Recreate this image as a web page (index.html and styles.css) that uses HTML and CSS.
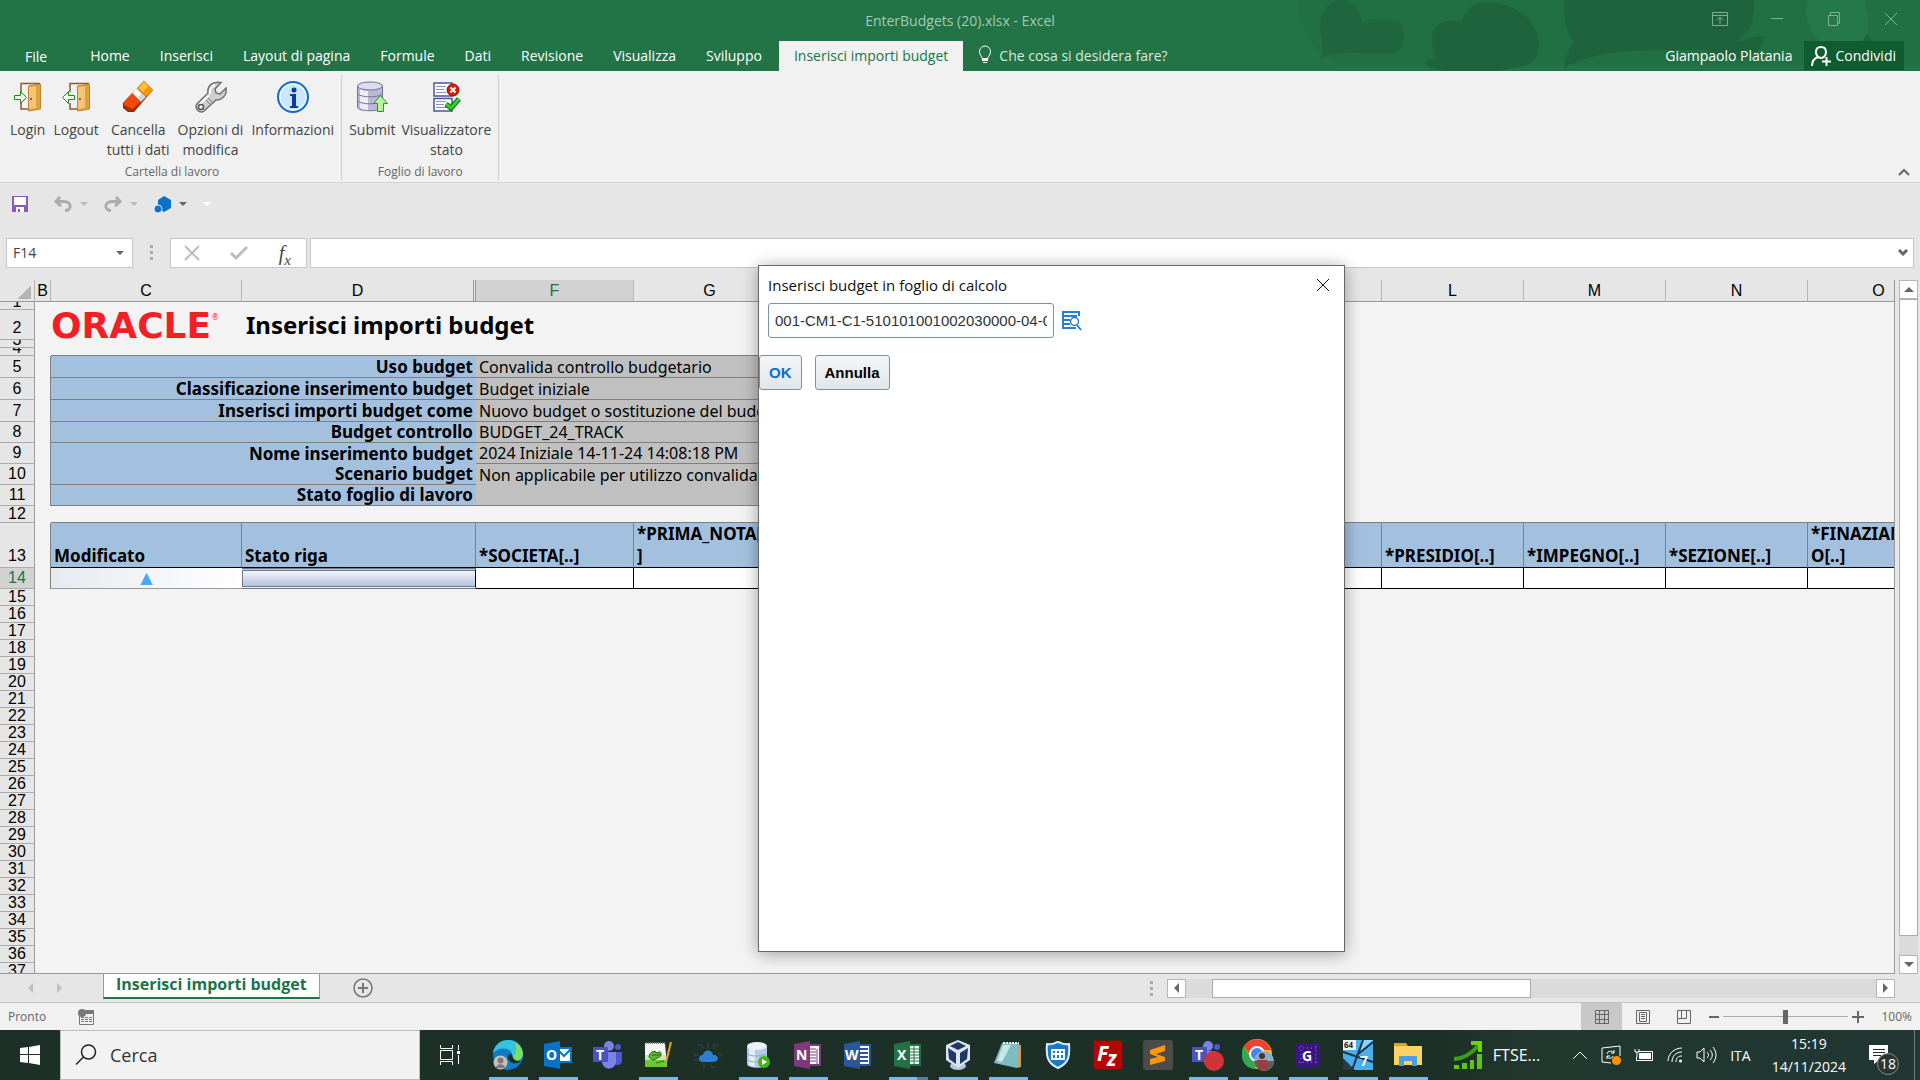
FILE: index.html
```html
<!DOCTYPE html>
<html lang="it">
<head>
    <meta charset="UTF-8">
    <meta name="viewport" content="width=device-width, initial-scale=1.0">
    <title>EnterBudgets (20).xlsx - Excel</title>
    <link rel="stylesheet" href="styles.css">
</head>
<body>
    <header class="titlebar">
        <svg class="clouds" width="640" height="71" viewBox="0 0 640 71" aria-hidden="true">
            <path fill="#206b41" d="M20 0h620v65H60C30 50 16 24 20 0z" opacity=".5"/>
            <g fill="#1f633c">
                <path d="M40 30a21 27 0 0 1 42-6c8-7 16-6 20-2 12-6 24 2 22 16-1 8-4 12-8 14-22 6-54-6-76 7 4-8 2-18 0-29z" opacity=".8"/>
                <path d="M152 38c0-14 14-20 30-16 4-12 10-20 26-20 26 0 56 22 50 48-2 10-8 14-14 16-32 6-62 14-96 0-4-6 0-8 8-6-3-6-4-14-4-22z"/>
                <path d="M284 0h190c2 28-12 44-34 48-50 6-110-6-156 20 2-14 6-20 10-26-8-10-11-24-10-42z"/>
                <path d="M420 44c20 6 40-4 60-8 8 0 2 10-6 18-22 10-40 4-54-10z"/>
                <path d="M558 65c4-18-4-33 18-33s12 15 20 33z"/>
            </g>
            <path fill="#257849" d="M528 0h56c8 24 6 44-20 54-22-4-44-26-36-54z"/>
        </svg>
        <div class="title-row">
            <span class="title">EnterBudgets (20).xlsx - Excel</span>
            <div class="window-buttons">
                <button aria-label="Opzioni barra multifunzione"><svg width="16" height="16" viewBox="0 0 16 16"><path d="M.5 1.5h15v13H.5zM.5 4.500h15M8 13V6M5 9l3-3 3 3"/></svg></button>
                <button aria-label="Riduci a icona"><svg width="16" height="16" viewBox="0 0 16 16"><path d="M2 7.500h12"/></svg></button>
                <button aria-label="Ripristina"><svg width="16" height="16" viewBox="0 0 16 16"><path d="M2.500 4.500h9v10h-9zM4.500 4V1.500h9v11H12"/></svg></button>
                <button aria-label="Chiudi"><svg width="16" height="16" viewBox="0 0 16 16"><path d="M2 2l12 12M14 2L2 14"/></svg></button>
            </div>
        </div>
        <nav class="tabs">
            <a href="#" class="file">File</a>
            <a href="#">Home</a>
            <a href="#">Inserisci</a>
            <a href="#">Layout di pagina</a>
            <a href="#">Formule</a>
            <a href="#">Dati</a>
            <a href="#">Revisione</a>
            <a href="#">Visualizza</a>
            <a href="#">Sviluppo</a>
            <a href="#" class="active">Inserisci importi budget</a>
            <a href="#" class="tell-me">
                <svg width="14" height="20" viewBox="0 0 14 20"><path fill="none" stroke="#fff" d="M4.500 14.500c0-3-3-4-3-8a5.500 5.500 0 0 1 11 0c0 4-3 5-3 8z"/><path fill="#fff" d="M4 13h6v3H4zM5 17h4v1H5z"/></svg>
                Che cosa si desidera fare?
            </a>
            <span class="user">Giampaolo Platania</span>
            <button class="share">
                <svg width="20" height="22" viewBox="0 0 20 22"><path fill="none" stroke="#fff" stroke-width="2" d="M10 2c3 0 5 2 5 5s-2 6-5 6-5-3-5-6 2-5 5-5zM1 21c0-5 3-8 6-9M11 16.500h9M15.500 12v9"/></svg>
                Condividi
            </button>
        </nav>
    </header>

    <section class="ribbon">
        <div class="group">
            <div class="tools">
                <button>
                    <svg width="32" height="32" viewBox="0 0 32 32"><path fill="none" stroke="#8a5a33" stroke-width="1.500" d="M9 11V2.500h19M9 22v6h8"/><path fill="#dca03c" stroke="#b98336" d="M16.500 5l12-2v25l-12 2z"/><path fill="#f3c574" d="M17 6l7-1v22l-7 1z"/><circle cx="19" cy="18" r="1" fill="#6b3f12"/><path fill="#f2ffec" stroke="#1b8a10" d="M2.500 14.500h6v-4l6 6-6 6v-4h-6z"/></svg>
                    <span>Login</span>
                </button>
                <button>
                    <svg width="32" height="32" viewBox="0 0 32 32"><path fill="none" stroke="#8a5a33" stroke-width="1.500" d="M10 11V2.500h19M10 22v6h8"/><path fill="#dca03c" stroke="#b98336" d="M17.500 5l12-2v25l-12 2z"/><path fill="#f3c574" d="M18 6l7-1v22l-7 1z"/><circle cx="20" cy="18" r="1" fill="#6b3f12"/><path fill="#f2ffec" stroke="#1b8a10" d="M14.500 14.500h-6v-4l-6 6 6 6v-4h6z"/></svg>
                    <span>Logout</span>
                </button>
                <button>
                    <svg width="32" height="32" viewBox="0 0 32 32"><path fill="#7d2f08" d="M1 22L22 0l9 9-19 22H6l-5-4z"/><path fill="#f3480c" d="M2 21l8-9 9 9-8 8-9-4z"/><path fill="#b92a00" d="M2 24l9 4 8-8-8 10H7l-5-4z"/><path fill="#cfd6dc" d="M10 12l5-5 9 9-5 5z"/><path fill="#fff" d="M11 12l3-4 5 5-3 4z"/><path fill="#f89406" d="M15 7l7-7 9 9-7 7z"/><path fill="#ffc640" d="M17 7l5-6 4 4-5 6z"/></svg>
                    <span>Cancella<br>tutti i dati</span>
                </button>
                <button>
                    <svg width="32" height="32" viewBox="0 0 32 32"><path fill="#cfcfcf" stroke="#6f6f6f" stroke-width="1.500" d="M26 1.500L20 8l1 4 4 1 6-6c1 7-3 12-10 12L9 30c-4 3-10-2-7-7l11-11c-1-7 4-12 13-10.500z"/><path fill="none" stroke="#fff" stroke-width="2" d="M15 13c-1-5 2-8 5-9M4 24l10-10"/><circle cx="6" cy="26" r="2.500" fill="#fff" stroke="#555" stroke-width="1.500"/><path stroke="#777" d="M11 19l4 4M13 17l4 4"/></svg>
                    <span>Opzioni di<br>modifica</span>
                </button>
                <button>
                    <svg width="32" height="32" viewBox="0 0 32 32"><circle cx="16" cy="16" r="15" fill="#cbe7ff" stroke="#1268d2" stroke-width="2"/><circle cx="16" cy="16" r="13" fill="none" stroke="#fff"/><circle cx="17" cy="9" r="2.500" fill="#0a3e9c"/><path fill="#0a3e9c" d="M13 13h6v12h2v2h-8v-2h2V15h-2z"/></svg>
                    <span>Informazioni</span>
                </button>
            </div>
            <div class="group-name">Cartella di lavoro</div>
        </div>
        <div class="group">
            <div class="tools">
                <button>
                    <svg width="32" height="32" viewBox="0 0 32 32"><path fill="#babad6" stroke="#71719b" d="M1.500 5v21c0 5 25 5 25 0V5z"/><path fill="#ececf7" d="M4 8c2 1 5 2 8 2v19c-3 0-6-1-8-2z"/><ellipse cx="14" cy="5" rx="12.500" ry="4" fill="#dcdcec" stroke="#71719b"/><path fill="none" stroke="#71719b" d="M1.500 12c0 5 25 5 25 0M1.500 19c0 5 25 5 25 0"/><path fill="#b8f5a0" stroke="#239a18" d="M24.500 14.500l7 8h-4v8h-6v-8h-4z"/></svg>
                    <span>Submit</span>
                </button>
                <button>
                    <svg width="32" height="32" viewBox="0 0 32 32"><path fill="#fff" stroke="#4d5596" stroke-width="1.500" d="M4 2h18v13H4zM4 17.500h18V30H4z"/><path stroke="#8a90bd" d="M6 5.500h10M6 8.500h8M6 11.500h10M6 20.500h10M6 23.500h8M6 26.500h11"/><circle cx="23" cy="9" r="6" fill="#d81c0c" stroke="#961004"/><path stroke="#fff" stroke-width="2" d="M20.500 6.500l5 5M25.500 6.500l-5 5"/><path fill="none" stroke="#0b6a08" stroke-width="5" d="M16 23l5 4 8-9"/><path fill="none" stroke="#2fd426" stroke-width="3" d="M16 23l5 4 8-9"/></svg>
                    <span>Visualizzatore<br>stato</span>
                </button>
            </div>
            <div class="group-name">Foglio di lavoro</div>
        </div>
        <button class="collapse" aria-label="Comprimi barra multifunzione"><svg width="12" height="8" viewBox="0 0 12 8"><path fill="none" stroke="#666" stroke-width="2" d="M1 7l5-5 5 5"/></svg></button>
    </section>

    <div class="quick-access">
        <button aria-label="Salva"><svg width="16" height="16" viewBox="0 0 16 16"><path fill="#8a5bb0" d="M0 0h16v16H0z"/><path fill="#fff" d="M2 1h12v8H2zM4 11h8v5H4z"/><path fill="#8a5bb0" d="M6 13h2v3H6z"/></svg></button>
        <button aria-label="Annulla digitazione"><svg width="18" height="16" viewBox="0 0 18 16"><path fill="none" stroke="#acacac" stroke-width="3" d="M6 1L2 5.500 7 10M3 5.500h7c8 0 8 9 1 9"/></svg><i class="caret light"></i></button>
        <button aria-label="Ripristina digitazione"><svg width="18" height="16" viewBox="0 0 18 16"><path fill="none" stroke="#acacac" stroke-width="3" d="M12 1l4 4.500-5 4.500M15 5.500H8c-8 0-8 9-1 9"/></svg><i class="caret light"></i></button>
        <button aria-label="Forme"><svg width="17" height="17" viewBox="0 0 17 17"><path fill="#0a72c8" d="M10 0l7 4v8l-7 4-6-4V4z"/><circle cx="4" cy="13" r="4" fill="#0a72c8" stroke="#e6e6e6"/></svg><i class="caret"></i></button>
        <i class="caret white"></i>
    </div>

    <div class="formula-bar">
        <div class="name-box">
            <input type="text" value="F14" aria-label="Casella nome">
            <button aria-label="Elenco nomi"><i class="caret"></i></button>
        </div>
        <span class="dots"><i></i><i></i><i></i></span>
        <div class="formula-tools">
            <button aria-label="Annulla"><svg width="16" height="16" viewBox="0 0 16 16"><path stroke="#bdbdbd" stroke-width="2" d="M1 1l14 14M15 1L1 15"/></svg></button>
            <button aria-label="Invio"><svg width="18" height="16" viewBox="0 0 18 16"><path fill="none" stroke="#bdbdbd" stroke-width="3" d="M1 8l5 5L17 2"/></svg></button>
            <button class="fx">f<sub>x</sub></button>
        </div>
        <div class="formula">
            <input type="text" aria-label="Barra della formula">
            <svg width="12" height="8" viewBox="0 0 12 8"><path fill="none" stroke="#666" stroke-width="3" d="M2 1l4 4 4-4"/></svg>
        </div>
    </div>

    <main class="workspace">
        <div class="sheet">
            <table>
                <colgroup>
                    <col class="col-head"><col class="col-b"><col class="col-c"><col class="col-d"><col class="col-f"><col class="col-g">
                    <col class="col-h"><col class="col-h"><col class="col-h"><col class="col-h">
                    <col class="col-l"><col class="col-l"><col class="col-l"><col class="col-l">
                </colgroup>
                <thead>
                    <tr><th class="corner"></th><th>B</th><th>C</th><th class="before-hidden">D</th><th class="selected">F</th><th>G</th><th>H</th><th>I</th><th>J</th><th>K</th><th>L</th><th>M</th><th>N</th><th class="last">O</th></tr>
                </thead>
                <tbody>
                    <tr class="tiny"><th><span>1</span></th></tr>
                    <tr class="r30"><th>2</th><td></td><td class="logo">ORACLE<sup>®</sup></td><td class="heading" colspan="4">Inserisci importi budget</td></tr>
                    <tr class="tiny"><th><span>3</span></th></tr>
                    <tr class="tiny"><th><span>4</span></th><td></td><td class="line" colspan="5"></td></tr>
                    <tr class="r22"><th>5</th><td class="edge"></td><td class="label" colspan="2">Uso budget</td><td class="value" colspan="3">Convalida controllo budgetario</td></tr>
                    <tr class="r22"><th>6</th><td class="edge"></td><td class="label" colspan="2">Classificazione inserimento budget</td><td class="value" colspan="3">Budget iniziale</td></tr>
                    <tr class="r22"><th>7</th><td class="edge"></td><td class="label" colspan="2">Inserisci importi budget come</td><td class="value" colspan="3">Nuovo budget o sostituzione del budget</td></tr>
                    <tr class="r21"><th>8</th><td class="edge"></td><td class="label" colspan="2">Budget controllo</td><td class="value" colspan="3">BUDGET_24_TRACK</td></tr>
                    <tr class="r21"><th>9</th><td class="edge"></td><td class="label open" colspan="2">Nome inserimento budget</td><td class="value" colspan="3">2024 Iniziale 14-11-24 14:08:18 PM</td></tr>
                    <tr class="r21"><th>10</th><td class="edge"></td><td class="label" colspan="2">Scenario budget</td><td class="value open" colspan="3">Non applicabile per utilizzo convalida controllo</td></tr>
                    <tr class="r21"><th>11</th><td class="edge"></td><td class="label" colspan="2">Stato foglio di lavoro</td><td class="value" colspan="3"></td></tr>
                    <tr><th>12</th><td></td><td class="line" colspan="12"></td></tr>
                    <tr class="r45"><th>13</th><td class="edge"></td><td class="field">Modificato</td><td class="field">Stato riga</td><td class="field">*SOCIETA[..]</td><td class="field">*PRIMA_NOTA[..<br>]</td><td class="field"></td><td class="field"></td><td class="field"></td><td class="field"></td><td class="field">*PRESIDIO[..]</td><td class="field">*IMPEGNO[..]</td><td class="field">*SEZIONE[..]</td><td class="field">*FINAZIAMENT<br>O[..]</td></tr>
                    <tr class="r21"><th class="selected">14</th><td class="edge"></td><td class="changed">▲</td><td class="status"></td><td class="entry"></td><td class="entry"></td><td class="entry"></td><td class="entry"></td><td class="entry"></td><td class="entry"></td><td class="entry"></td><td class="entry"></td><td class="entry"></td><td class="entry"></td></tr>
                    <tr><th>15</th></tr>
                    <tr><th>16</th></tr>
                    <tr><th>17</th></tr>
                    <tr><th>18</th></tr>
                    <tr><th>19</th></tr>
                    <tr><th>20</th></tr>
                    <tr><th>21</th></tr>
                    <tr><th>22</th></tr>
                    <tr><th>23</th></tr>
                    <tr><th>24</th></tr>
                    <tr><th>25</th></tr>
                    <tr><th>26</th></tr>
                    <tr><th>27</th></tr>
                    <tr><th>28</th></tr>
                    <tr><th>29</th></tr>
                    <tr><th>30</th></tr>
                    <tr><th>31</th></tr>
                    <tr><th>32</th></tr>
                    <tr><th>33</th></tr>
                    <tr><th>34</th></tr>
                    <tr><th>35</th></tr>
                    <tr><th>36</th></tr>
                    <tr><th>37</th></tr>
                </tbody>
            </table>
        </div>
        <div class="scroll-y">
            <button aria-label="Scorri su"><i class="caret up"></i></button>
            <div class="thumb"></div>
            <button aria-label="Scorri giù"><i class="caret big"></i></button>
        </div>
    </main>

    <div class="sheet-tabs">
        <div class="sheet-nav"><i class="arrow-left"></i><i class="arrow-right"></i></div>
        <a href="#" class="sheet-tab">Inserisci importi budget</a>
        <button class="add-sheet" aria-label="Nuovo foglio"><svg width="20" height="20" viewBox="0 0 20 20"><circle cx="10" cy="10" r="9" fill="none" stroke="#777" stroke-width="1.500"/><path stroke="#777" stroke-width="2" d="M10 5v10M5 10h10"/></svg></button>
        <span class="dots"><i></i><i></i><i></i></span>
        <div class="scroll-x">
            <button aria-label="Scorri a sinistra"><i class="arrow-left"></i></button>
            <div class="track"><div class="thumb"></div></div>
            <button aria-label="Scorri a destra"><i class="arrow-right"></i></button>
        </div>
    </div>

    <footer class="statusbar">
        <span>Pronto</span>
        <svg class="macro" width="16" height="16" viewBox="0 0 16 16"><path fill="none" stroke="#777" d="M1.500 6v9.500h14v-14H6"/><path fill="#777" d="M6 1h10v4H6z"/><circle cx="4" cy="4" r="4" fill="#777"/><path stroke="#777" stroke-dasharray="3 1" d="M3 8.500h11M3 10.500h11M3 12.500h11"/></svg>
        <div class="views">
            <button class="active" aria-label="Normale"><svg width="14" height="14" viewBox="0 0 14 14"><path d="M.5.500h13v13H.5zM.5 4.500h13M.5 9.500h13M4.500.500v13M9.500.500v13"/></svg></button>
            <button aria-label="Layout di pagina"><svg width="14" height="14" viewBox="0 0 14 14"><path d="M.5.500h13v13H.5zM3.500 2.500h7v9h-7zM5 4.500h4M5 6.500h4M5 8.500h4"/></svg></button>
            <button aria-label="Anteprima interruzioni"><svg width="14" height="14" viewBox="0 0 14 14"><path d="M.5.500h13v13H.5zM4.500.500v8M9.500.500v8M.5 8.500h9"/></svg></button>
        </div>
        <div class="zoom">
            <button aria-label="Zoom indietro"><svg width="10" height="12" viewBox="0 0 10 12"><path stroke="#666" stroke-width="2" d="M0 6h10"/></svg></button>
            <input type="range" min="0" max="100" value="50" aria-label="Zoom">
            <button aria-label="Zoom avanti"><svg width="12" height="12" viewBox="0 0 12 12"><path stroke="#666" stroke-width="2" d="M0 6h12M6 0v12"/></svg></button>
            <span>100%</span>
        </div>
    </footer>

    <div class="taskbar">
        <button class="start" aria-label="Start"><svg width="20" height="20" viewBox="0 0 20 20"><path fill="#fff" d="M0 3l8-1v7H0zM9 2l11-2v9H9zM0 10h8v8l-8-1zM9 10h11v10L9 18z"/></svg></button>
        <label class="search">
            <svg width="22" height="22" viewBox="0 0 22 22"><circle cx="13.500" cy="8" r="7" fill="none" stroke="#222" stroke-width="1.500"/><path stroke="#222" stroke-width="1.500" d="M8.500 13L1 20.500"/></svg>
            <input type="text" placeholder="Cerca" aria-label="Cerca">
        </label>
        <button class="task-view" aria-label="Visualizzazione attività"><svg width="20" height="20" viewBox="0 0 20 20"><path fill="none" stroke="#fff" d="M.5 0v3.500h12V0M.5 5.500h12v9H.5zM.5 20v-3.500h12V20M18.500 0v5M18.500 10v9"/><path fill="#fff" d="M17 6h3v3h-3z"/></svg></button>
        <div class="apps">
            <button class="open" aria-label="Edge"><svg width="30" height="30" viewBox="0 0 30 30"><circle cx="15" cy="15" r="15" fill="#0f7cc9"/><path fill="#34c5dd" d="M0 13C2-4 29-5 30 14c0 4-3 7-8 7-3 0-5-1-3-3 3-8-10-14-19-5z"/><path fill="#7bdd62" d="M22 2c10 6 11 18 0 19-4 0-5-2-3-3 3-4 6-6 3-16z"/><path fill="#1d3027" d="M28 21c-6 5-14 1-13-5 1-2 3-3 4-1 2 7 6 6 9 6z"/><circle cx="7.500" cy="22.500" r="7" fill="#c4c0bd"/><circle cx="7.500" cy="20.500" r="3" fill="#807870"/><path fill="#807870" d="M3 28c0-5 9-5 9 0z"/></svg></button>
            <button class="open" aria-label="Outlook"><svg width="28" height="28" viewBox="0 0 28 28"><path fill="#fff" d="M15 7h12v14H15z"/><path fill="none" stroke="#0872c6" stroke-width="2" d="M15 7h12v14H15M15 10l5 5 7-7"/><path fill="#0872c6" d="M0 3l16-3v28L0 25z"/><text x="2" y="19" class="glyph">O</text></svg></button>
            <button aria-label="Teams"><svg width="30" height="28" viewBox="0 0 30 28"><circle cx="16" cy="5" r="5" fill="#7b83eb"/><circle cx="25" cy="6" r="3" fill="#5059c9"/><path fill="#5059c9" d="M20 11h9v8c0 5-4 6-8 4z"/><path fill="#7b83eb" d="M9 11h14v9c0 10-14 10-14 0z"/><path fill="#4b53bc" d="M0 6h15v15H0z"/><text x="3" y="19" class="glyph">T</text></svg></button>
            <button class="open" aria-label="Notepad++"><svg width="30" height="30" viewBox="0 0 30 30"><path fill="#f4f7ef" d="M2 3h20l2 24H2z"/><path fill="#c9eba6" d="M2 15h21v6H2z"/><path fill="#6cc62f" d="M2 20h21l1 7H2z"/><path fill="none" stroke="#777" stroke-dasharray="1 1" stroke-width="2" d="M3 3h19"/><path fill="#5db83a" stroke="#245b13" d="M6 17c1-6 6-7 8-4 5-4 6 4 0 5-3 3-6 2-8-1z"/><path fill="none" stroke="#1e7012" d="M9 15h9M13 23l8-2"/><path stroke="#e8a020" stroke-width="2" d="M28 2l-5 20"/></svg></button>
            <button aria-label="Cloud"><svg width="28" height="28" viewBox="0 0 28 28"><path fill="none" stroke="#34485a" d="M14 8V1M8 8V4H4M20 8V4h5M5 14H0v-3M4 19H0M24 13h4v5M10 22v5M17 22v4h4"/><path fill="#2f7fd0" d="M9 21c-6 0-5-7 0-7 1-6 9-6 10 0 6-1 7 7 0 7z"/></svg></button>
            <button class="open" aria-label="SQL Developer"><svg width="26" height="28" viewBox="0 0 26 28"><path fill="#b4cbe2" d="M2 5v18c0 5 20 5 20 0V5z"/><path fill="#e4eef7" d="M4 7l6 2v17l-6-2z"/><ellipse cx="12" cy="5" rx="10" ry="4" fill="#edf4fa"/><path fill="none" stroke="#8ba9c6" d="M2 12c0 4 20 4 20 0M2 18c0 4 20 4 20 0"/><circle cx="19" cy="21" r="6" fill="#40b619"/><path fill="#fff" d="M17 18l5 3-5 3z"/></svg></button>
            <button class="open" aria-label="OneNote"><svg width="28" height="28" viewBox="0 0 28 28"><path fill="#fff" stroke="#80397b" stroke-width="2" d="M14 4h12v20H14z"/><path stroke="#80397b" d="M16 8h6M16 11h6M16 14h6M16 17h6M16 20h6M23 8v15"/><path fill="#80397b" d="M0 3l16-3v28L0 25z"/><text x="2" y="19" class="glyph">N</text></svg></button>
            <button aria-label="Word"><svg width="28" height="28" viewBox="0 0 28 28"><path fill="#fff" stroke="#2b579a" stroke-width="2" d="M14 4h12v20H14z"/><path stroke="#2b579a" stroke-width="2" d="M16 8h8M16 12h8M16 16h8M16 20h8"/><path fill="#2b579a" d="M0 3l16-3v28L0 25z"/><text x="1" y="19" class="glyph">W</text></svg></button>
            <button class="open stacked" aria-label="Excel"><svg width="28" height="28" viewBox="0 0 28 28"><path fill="#fff" stroke="#217346" stroke-width="2" d="M14 4h12v20H14z"/><path stroke="#217346" d="M16 8h9M16 11h9M16 14h9M16 17h9M16 20h9M20 5v18"/><path fill="#217346" d="M0 3l16-3v28L0 25z"/><text x="3" y="19" class="glyph">X</text></svg></button>
            <button class="open" aria-label="VirtualBox"><svg width="26" height="30" viewBox="0 0 26 30"><ellipse cx="13" cy="26" rx="8" ry="4" fill="#b7c4dc"/><path fill="#dbe4f0" d="M13 0l12 5v15l-12 8L1 20V5z"/><path fill="#1f3966" d="M13 2l8 4-8 4-8-4zM3 8l8 5v11l-7-5zM23 8l-8 5v11l7-5z"/></svg></button>
            <button class="open" aria-label="Blocco note"><svg width="28" height="28" viewBox="0 0 28 28"><path fill="#c5a06a" d="M23 3l4 1v22l-5 1z"/><path fill="#7cbcc2" d="M8 2h17l-2 25L0 22z"/><path fill="#c6e7e8" d="M9 4h8L8 21l-5-1z"/><path stroke="#e8f4f4" stroke-width="2" stroke-dasharray="2 1" d="M9 2h16"/></svg></button>
            <button aria-label="VPN"><svg width="26" height="28" viewBox="0 0 26 28"><path fill="#1779cc" stroke="#dfeefa" stroke-width="2" d="M2 3c8 1 8-2 11-2s3 3 11 2c1 12 0 19-11 24C2 22 1 15 2 3z"/><path fill="none" stroke="#fff" stroke-width="2" d="M7 9h12v9H7zM7 13h12M11 9v9M15 9v9"/></svg></button>
            <button aria-label="FileZilla"><svg width="30" height="30" viewBox="0 0 30 30"><path fill="#b60404" stroke="#b60404" stroke-dasharray="2 1" d="M1 1h28v28H1z"/><text x="4" y="21" class="glyph tall">F</text><text x="14" y="26" class="glyph tall">z</text></svg></button>
            <button aria-label="Sublime Text"><svg width="30" height="30" viewBox="0 0 30 30"><rect width="30" height="30" rx="3" fill="#4b4b4b"/><path fill="#ff9800" d="M7 10l15-5v6l-9 3 9 3v4L7 25v-6l8-2-8-3z"/></svg></button>
            <button class="open" aria-label="Teams riunione"><svg width="32" height="32" viewBox="0 0 32 32"><circle cx="16" cy="7" r="5" fill="#7b83eb"/><circle cx="25" cy="8" r="3" fill="#5059c9"/><path fill="#7b83eb" d="M9 12h14v14H13z"/><path fill="#4b53bc" d="M0 8h15v15H0z"/><text x="3" y="21" class="glyph">T</text><circle cx="22" cy="22" r="10" fill="#d13438"/></svg></button>
            <button class="open" aria-label="Chrome"><svg width="32" height="32" viewBox="0 0 32 32"><circle cx="15" cy="15" r="15" fill="#fbc116"/><path fill="#ea4335" d="M2 7c8-11 23-8 27 4H15l-5 8z"/><path fill="#34a853" d="M2 7l8 14 6 2-3 7C0 29-3 15 2 7z"/><circle cx="15" cy="15" r="7" fill="#4285f4" stroke="#fff" stroke-width="2"/><circle cx="22" cy="22" r="10" fill="#8fabc5"/><path fill="#59624f" d="M12 22h20c0 12-18 14-20 0z"/><circle cx="20" cy="17" r="3" fill="#4c3430"/><path fill="#a13b42" d="M15 21h10v10h-8z"/></svg></button>
            <button class="open" aria-label="G"><svg width="24" height="24" viewBox="0 0 24 24"><rect width="24" height="24" rx="4" fill="#3a1683"/><path stroke="#9b70ea" stroke-dasharray="1 3" d="M3 5h18M3 19h18M5 3v18M20 3v18"/><text x="6" y="18" class="glyph">G</text></svg></button>
            <button class="open" aria-label="7 64"><svg width="30" height="30" viewBox="0 0 30 30"><path fill="#4aaeea" d="M0 0h30v30H0z"/><path fill="#8bd3f8" d="M18 0h12L18 14z"/><path fill="#303848" d="M0 18l12 12H0z"/><path stroke="#1e3142" stroke-width="2" d="M20 0L9 30M0 12l30 10M14 15L30 2"/><path fill="#f4f4f4" d="M0 0h13v10H0z"/><text x="1" y="8" class="tiny-glyph">64</text><text x="17" y="26" class="glyph">7</text></svg></button>
            <button class="open" aria-label="Esplora file"><svg width="28" height="24" viewBox="0 0 28 24"><path fill="#e0a11b" d="M0 0h12l2 3v5H0z"/><path fill="#fcd463" d="M0 3h28v19H0z"/><path fill="#4aa0df" d="M5 23V13h18v10h-5v-5h-8v5z"/></svg></button>
        </div>
        <div class="tray">
            <button class="stocks">
                <svg width="28" height="28" viewBox="0 0 28 28"><path fill="#5fc414" d="M0 24h5v4H0zM8 22h5v6H8zM16 19h4v9h-4zM23 13h5v15h-5z"/><path fill="none" stroke="#3aa216" stroke-width="4" d="M0 18c10 0 18-6 25-14"/><path fill="#6bd20c" d="M17 0h11v11h-4V4h-7z"/></svg>
                FTSE...
            </button>
            <svg width="16" height="9" viewBox="0 0 16 9"><path d="M1 8l7-7 7 7"/></svg>
            <svg width="20" height="20" viewBox="0 0 20 20"><path d="M19 11V1L1 3v14l9 1M6 9c0-3 6-4 7-1M13 5v3h-3M12 11c-1 3-5 3-6 0M6 14v-3h3"/><circle cx="15.500" cy="15.500" r="4.500" class="orange"/></svg>
            <svg width="20" height="14" viewBox="0 0 20 14"><path d="M4 3.500h14.500v9H2.500V9M1 1v3h4V1M3 4v5"/><path d="M5 5h12v6H5z" class="solid"/></svg>
            <svg width="16" height="16" viewBox="0 0 16 16"><path d="M1 14C1 7 7 1 15 1M5 15c0-6 4-10 10-10M9 15c0-4 2-6 6-6"/><circle cx="13.500" cy="14" r="1.500" class="solid"/></svg>
            <svg width="21" height="18" viewBox="0 0 21 18"><path d="M1 6h3l4-4v14l-4-4H1zM11 6c2 2 2 4 0 6M14 4c3 3 3 7 0 10M17 1c4 5 4 11 0 16"/></svg>
            <span>ITA</span>
            <div class="clock">15:19<br>14/11/2024</div>
            <div class="notifications">
                <svg width="20" height="20" viewBox="0 0 20 20"><path class="solid" d="M0 0h19v15h-9l-5 4v-4H0z"/><path class="dark" d="M4 4.500h12M4 7.500h12M4 10.500h8"/></svg>
                <span class="badge">18</span>
            </div>
        </div>
    </div>

    <div class="dialog" role="dialog" aria-label="Inserisci budget in foglio di calcolo">
        <div class="dialog-head">
            <label for="account">Inserisci budget in foglio di calcolo</label>
            <button aria-label="Chiudi"><svg width="14" height="14" viewBox="0 0 14 14"><path stroke="#111" d="M1 1l12 12M13 1L1 13"/></svg></button>
        </div>
        <div class="dialog-field">
            <input type="text" id="account" value="001-CM1-C1-510101001002030000-04-000">
            <button aria-label="Cerca"><svg width="20" height="20" viewBox="0 0 20 20"><path fill="none" stroke="#2a7fcf" stroke-width="2" d="M17 5V1H1v4h14M1 9h7M1 5v4M1 13h7M1 9v8h13"/><circle cx="12.500" cy="10.500" r="4" fill="#fff" stroke="#2a7fcf" stroke-width="1.500"/><path stroke="#2a7fcf" stroke-width="2" d="M15 14l4 5"/></svg></button>
        </div>
        <div class="dialog-actions">
            <button class="primary">OK</button>
            <button>Annulla</button>
        </div>
    </div>
</body>
</html>
```

FILE: styles.css
```css
* {
    box-sizing: border-box;
}

body {
    margin: 0;
    height: 100vh;
    display: flex;
    flex-direction: column;
    overflow: hidden;
    background-color: #e6e6e6;
    color: #444;
    font-family: "Open Sans", "Noto Sans", sans-serif;
    font-size: 14px;
}

button, input {
    font: inherit;
    color: inherit;
    margin: 0;
    padding: 0;
    border: none;
    background: none;
}

a {
    color: inherit;
    text-decoration: none;
}

svg {
    display: block;
    flex: none;
}

/* small triangles */
.caret {
    display: inline-block;
    border: 4px solid transparent;
    border-top-color: #666;
    border-bottom: none;
}

.caret.light { border-top-color: #bbb; }
.caret.white { border-top-color: #fff; }

.caret.up {
    border: 5px solid transparent;
    border-top: none;
    border-bottom-color: #666;
}

.caret.big { border-width: 5px 5px 0; }

.arrow-left, .arrow-right {
    border: 5px solid transparent;
}

.arrow-left {
    border-left: none;
    border-right-color: #666;
}

.arrow-right {
    border-right: none;
    border-left-color: #666;
}

.dots {
    display: flex;
    flex-direction: column;
    gap: 3px;
}

.dots i {
    width: 3px;
    height: 3px;
    background-color: #aaa;
}

/* title bar */
.titlebar {
    position: relative;
    background-color: #227447;
    color: #fff;
}

.clouds {
    position: absolute;
    top: 0;
    right: 0;
}

.title-row {
    position: relative;
    display: flex;
    justify-content: center;
    align-items: center;
    height: 41px;
}

.title {
    color: #a3cbb3;
}

.window-buttons {
    position: absolute;
    right: 21px;
    top: 11px;
    display: flex;
    gap: 41px;
}

.window-buttons svg {
    fill: none;
    stroke: #7fae90;
}

.tabs {
    position: relative;
    display: flex;
    height: 30px;
}

.tabs > a, .user {
    display: flex;
    align-items: center;
    padding: 0 15px 2px;
    white-space: nowrap;
}

.tabs .file {
    padding: 0 28px 0 25px;
}

.tabs .active {
    margin-left: 2px;
    background-color: #f1f1f1;
    color: #217346;
}

.tabs .tell-me {
    gap: 7px;
    margin-right: auto;
    color: #d8eadf;
}

.tabs .user {
    padding: 0 12px 2px;
}

.share {
    display: flex;
    align-items: center;
    gap: 4px;
    height: 29px;
    margin-right: 16px;
    padding: 0 8px 0 7px;
    background-color: #0e5c2f;
}

/* ribbon */
.ribbon {
    position: relative;
    display: flex;
    height: 112px;
    padding: 4px 0 2px;
    background-color: #f1f1f1;
    border-bottom: 1px solid #d2d2d2;
}

.group {
    display: flex;
    flex-direction: column;
    justify-content: space-between;
    padding: 6px 7px 0;
    border-right: 1px solid #d0d0d0;
}

.group:first-child {
    padding-left: 10px;
}

.tools {
    display: flex;
    gap: 6px;
}

.group:first-child .tools {
    gap: 8px;
}

.tools button {
    display: flex;
    flex-direction: column;
    align-items: center;
    gap: 7px;
    line-height: 20px;
}

.group-name {
    text-align: center;
    font-size: 12px;
    line-height: 17px;
    color: #666;
}

.collapse {
    position: absolute;
    right: 10px;
    bottom: 6px;
}

.quick-access {
    display: flex;
    align-items: center;
    gap: 16px;
    height: 42px;
    padding: 0 12px;
}

.quick-access button {
    display: flex;
    align-items: center;
    gap: 8px;
}

.quick-access button:first-child {
    margin-right: 10px;
}

/* formula bar */
.formula-bar {
    display: flex;
    align-items: center;
    height: 55px;
    padding: 0 6px;
}

.name-box, .formula-tools, .formula {
    display: flex;
    align-items: center;
    height: 30px;
    background-color: #fff;
    border: 1px solid #c6c6c6;
}

.name-box {
    width: 127px;
    padding: 0 8px 0 6px;
}

.name-box input {
    flex: 1;
    min-width: 0;
}

.name-box button {
    display: flex;
}

.formula-bar .dots {
    margin: 0 17px;
}

.formula-tools {
    width: 137px;
    justify-content: space-between;
    padding: 0 15px 0 13px;
}

.formula-tools .fx {
    font-family: "Liberation Serif", serif;
    font-style: italic;
    font-size: 20px;
    line-height: 20px;
}

.fx sub {
    font-size: 15px;
    line-height: 0;
}

.formula {
    flex: 1;
    margin-left: 3px;
    padding-right: 4px;
}

.formula input {
    flex: 1;
}

/* worksheet */
.workspace {
    flex: 1;
    min-height: 0;
    display: flex;
    gap: 4px;
    padding-right: 2px;
}

.sheet {
    flex: 1;
    min-width: 0;
    overflow: hidden;
    border-right: 1px solid #999;
    border-bottom: 1px solid #999;
    background-color: #f3f3f3;
}

.sheet table {
    width: 1950px;
    table-layout: fixed;
    border-collapse: separate;
    border-spacing: 0;
    font-family: "Noto Sans", sans-serif;
    color: #000;
}

.col-head { width: 35px; }
.col-b { width: 16px; }
.col-c { width: 191px; }
.col-d { width: 234px; }
.col-f { width: 158px; }
.col-g { width: 152px; }
.col-h { width: 149px; }
.col-l { width: 142px; }

.sheet th, .sheet td {
    padding: 0;
    overflow: hidden;
    white-space: nowrap;
}

.sheet th {
    height: 17px;
    background-color: #e6e6e6;
    border-right: 1px solid #999;
    border-bottom: 1px solid #ababab;
    font-family: "Liberation Sans", sans-serif;
    font-size: 16px;
    font-weight: normal;
    line-height: 16px;
}

.sheet thead th {
    height: 22px;
    border-right-color: #b5b5b5;
    border-bottom-color: #999;
    vertical-align: bottom;
    line-height: 20px;
}

.sheet .corner {
    background-image: linear-gradient(135deg, transparent 50%, #b4b4b4 50%);
    background-size: 14px 14px;
    background-position: 17px 5px;
    background-repeat: no-repeat;
}

.sheet .before-hidden {
    border-right: 3px double #999;
}

.sheet th.selected {
    background-color: #d2d2d2;
    color: #217346;
}

.sheet .r45 th, .sheet .r30 th {
    vertical-align: bottom;
    line-height: 22px;
}

.tiny th { height: 8px; }
.r30 th { height: 30px; }
.r22 th { height: 22px; }
.r21 th { height: 21px; }
.r45 th { height: 45px; }

.tiny span {
    display: flex;
    justify-content: center;
    align-items: flex-end;
    height: 7px;
    overflow: hidden;
    line-height: 14px;
}

.sheet .logo {
    overflow: visible;
    color: #f31f26;
    font-family: "DejaVu Sans", sans-serif;
    font-size: 36px;
    font-weight: bold;
    line-height: 29px;
}

.logo sup {
    font-size: 8px;
    font-weight: normal;
    line-height: 0;
    vertical-align: 18px;
}

.sheet .heading {
    padding-left: 4px;
    font-size: 24px;
    font-weight: bold;
    line-height: 28px;
}

.sheet .line {
    border-bottom: 1px solid #7f7f7f;
}

.sheet .edge {
    border-right: 1px solid #7f7f7f;
}

.sheet .label, .sheet .value {
    border-bottom: 1px solid #7f7f7f;
    font-size: 16px;
    line-height: 20px;
}

.sheet .label {
    padding-right: 3px;
    background-color: #a3c1df;
    font-size: 17px;
    font-weight: bold;
    text-align: right;
}

.sheet .value {
    padding-left: 3px;
    background-color: #c0c0c0;
}

.sheet .open {
    border-bottom: none;
}

.sheet .field {
    padding-left: 3px;
    background-color: #a3c1df;
    border-right: 1px solid #7f7f7f;
    border-bottom: 1px solid #000;
    font-size: 17px;
    font-weight: bold;
    line-height: 22px;
    vertical-align: bottom;
}

.sheet .changed {
    background-image: linear-gradient(to right, #e6eaf0, #fff);
    border-bottom: 1px solid #999;
    color: #4aa8f8;
    font-family: "DejaVu Sans", sans-serif;
    font-size: 16px;
    line-height: 18px;
    text-align: center;
}

.sheet .status {
    border: 3px double #6f7888;
    border-right: 1px solid #000;
    border-left: 1px solid #6f7888;
    background-image: linear-gradient(#f2f5fa, #b5c3de);
}

.sheet .entry {
    background-color: #fff;
    border-right: 1px solid #000;
    border-bottom: 1px solid #000;
}

/* scroll bars */
.scroll-y {
    display: flex;
    flex-direction: column;
    width: 19px;
    background-color: #dbdbdb;
}

.scroll-y button, .scroll-x button {
    display: flex;
    flex: none;
    align-items: center;
    justify-content: center;
    width: 19px;
    height: 19px;
    background-color: #fff;
    border: 1px solid #b5b5b5;
}

.thumb {
    background-color: #fff;
    border: 1px solid #ababab;
}

.scroll-y .thumb {
    flex: 1;
    margin-bottom: 19px;
}

.sheet-tabs {
    display: flex;
    align-items: center;
    height: 29px;
    padding-right: 25px;
    border-bottom: 1px solid #c3c3c3;
}

.sheet-nav {
    display: flex;
    gap: 24px;
    width: 103px;
    padding-left: 28px;
    opacity: 0.3;
}

.sheet-tab {
    align-self: flex-start;
    height: 25px;
    padding: 0 12px;
    background-color: #fff;
    border: 1px solid #999;
    border-top: none;
    border-bottom: 2px solid #217346;
    color: #217346;
    font-size: 16px;
    font-weight: bold;
    line-height: 20px;
}

.add-sheet {
    margin-left: 33px;
}

.sheet-tabs .dots {
    margin: 0 14px 0 auto;
}

.scroll-x {
    display: flex;
    width: 728px;
    background-color: #dbdbdb;
}

.track {
    flex: 1;
    padding-left: 26px;
}

.track .thumb {
    width: 48%;
    height: 19px;
}

/* status bar */
.statusbar {
    display: flex;
    align-items: center;
    height: 27px;
    padding: 0 8px;
    background-color: #f1f1f1;
    font-size: 12px;
    color: #666;
}

.macro {
    margin-left: 32px;
}

.views {
    display: flex;
    align-self: stretch;
    margin-left: auto;
}

.views button {
    display: flex;
    align-items: center;
    justify-content: center;
    width: 41px;
}

.views .active {
    background-color: #c8c8c8;
}

.views svg {
    fill: none;
    stroke: #666;
}

.zoom {
    display: flex;
    align-items: center;
    gap: 4px;
    margin-left: 5px;
}

.zoom input {
    appearance: none;
    width: 125px;
    height: 14px;
    background: linear-gradient(#aaa, #aaa) center / 100% 1px no-repeat;
}

.zoom input::-webkit-slider-thumb {
    appearance: none;
    width: 5px;
    height: 14px;
    background-color: #666;
}

.zoom span {
    margin-left: 13px;
}

/* taskbar */
.taskbar {
    display: flex;
    height: 50px;
    background: linear-gradient(to right, #1d3027 75%, #21382f 80%, #203733);
    color: #fff;
}

.start {
    display: flex;
    align-items: center;
    justify-content: center;
    width: 60px;
}

.search {
    display: flex;
    align-items: center;
    gap: 13px;
    width: 360px;
    padding-left: 14px;
    background-color: #f2f2f2;
    border: 1px solid #bbb;
    color: #333;
}

.search input {
    flex: 1;
    min-width: 0;
    font-size: 18px;
}

.search input::placeholder {
    color: #333;
}

.task-view {
    width: 63px;
    padding-left: 20px;
}

.apps {
    display: flex;
}

.apps button {
    position: relative;
    display: flex;
    align-items: center;
    justify-content: center;
    width: 50px;
}

.apps .open::after {
    content: "";
    position: absolute;
    left: 6px;
    bottom: 0;
    width: 39px;
    height: 3px;
    background-color: #76b9ed;
}

.apps .stacked::after {
    background: linear-gradient(to right, #76b9ed 28px, #527f9e 28px);
}

.glyph {
    fill: #fff;
    font-size: 14px;
    font-weight: bold;
}

.glyph.tall {
    font-size: 21px;
    font-style: italic;
}

.tiny-glyph {
    fill: #222;
    font-size: 8px;
    font-weight: bold;
}

.tray {
    display: flex;
    flex: 1;
    align-items: center;
    justify-content: flex-end;
    gap: 13px;
    margin-right: 5px;
    padding-right: 13px;
    border-right: 1px solid #6d7d76;
    white-space: nowrap;
}

.tray > svg {
    fill: none;
    stroke: #fff;
}

.tray .solid {
    fill: #fff;
    stroke: none;
}

.tray .orange {
    fill: #ff9500;
    stroke: none;
}

.tray .dark {
    stroke: #1d3027;
}

.stocks {
    display: flex;
    align-items: center;
    gap: 11px;
    margin-right: 19px;
    font-size: 16px;
}

.clock {
    margin: 0 10px 0 8px;
    text-align: center;
    line-height: 23px;
}

.notifications {
    position: relative;
    width: 32px;
    height: 20px;
}

.badge {
    position: absolute;
    left: 8px;
    top: 8px;
    width: 22px;
    height: 22px;
    border: 1px solid #888;
    border-radius: 50%;
    background-color: #2c3532;
    font-size: 14px;
    line-height: 20px;
    text-align: center;
}

/* account picker window */
.dialog {
    position: absolute;
    left: 758px;
    top: 265px;
    width: 587px;
    height: 687px;
    background-color: #fff;
    border: 1px solid #666;
    box-shadow: 0 2px 16px rgba(0, 0, 0, 0.35);
    color: #111;
}

.dialog-head {
    display: flex;
    align-items: center;
    justify-content: space-between;
    height: 37px;
    padding: 0 14px 0 9px;
    font-size: 15px;
}

.dialog-field {
    display: flex;
    align-items: center;
    gap: 8px;
    padding-left: 9px;
}

.dialog-field input {
    width: 286px;
    height: 35px;
    padding: 0 6px;
    border: 1px solid #7b93a7;
    border-radius: 3px;
    background-color: #fcfdfe;
    color: #333;
    font-family: "Liberation Sans", sans-serif;
    font-size: 15px;
}

.dialog-actions {
    display: flex;
    gap: 13px;
    margin-top: 17px;
}

.dialog-actions button {
    height: 35px;
    padding: 0 9px;
    border: 1px solid #7b93a7;
    border-radius: 3px;
    background-image: linear-gradient(#f4f5f7, #e2e6ea);
    color: #000;
    font-family: "Liberation Sans", sans-serif;
    font-size: 15px;
    font-weight: bold;
}

.dialog-actions .primary {
    color: #0a6fce;
}
```
